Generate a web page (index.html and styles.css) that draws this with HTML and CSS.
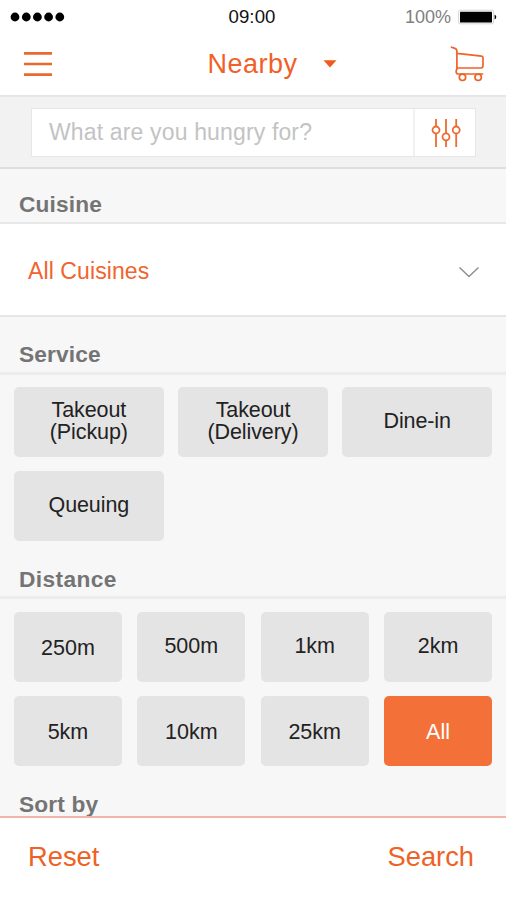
FILE: index.html
```html
<!DOCTYPE html>
<html lang="en">
<head>
<meta charset="utf-8">
<title>Nearby</title>
<link rel="stylesheet" href="styles.css">
</head>
<body>
<div class="app">
  <div class="status">
    <svg class="signal" width="56" height="10" viewBox="0 0 56 10"><circle cx="5" cy="5" r="4.4"/><circle cx="16.3" cy="5" r="4.4"/><circle cx="27.4" cy="5" r="4.4"/><circle cx="38.6" cy="5" r="4.4"/><circle cx="49.8" cy="5" r="4.4"/></svg>
    <span class="time">09:00</span>
    <div class="power">
      <span class="percent">100%</span>
      <svg width="40" height="16" viewBox="0 0 40 16"><rect x=".6" y="1.2" width="35" height="13.6" rx="1.5" fill="#fff" stroke="#ccc" stroke-width=".8"/><rect x="2" y="2.7" width="32" height="10.8" rx=".5"/><path d="M36.6 5.8a2.4 2.4 0 0 1 0 4.6z"/></svg>
    </div>
  </div>
  <header class="nav">
    <svg class="menu" width="28" height="26" viewBox="0 0 28 26" stroke="#ea6a2e" stroke-width="2.7"><path d="M0 2.4h28M0 13h28M0 23.7h28"/></svg>
    <div class="place"><span>Nearby</span><svg width="14" height="8" viewBox="0 0 14 8"><path d="M.5.3h13L7 7.5z" fill="#f05a1c"/></svg></div>
    <svg class="cart" width="36" height="38" viewBox="0 0 36 38" fill="none" stroke="#ee6428" stroke-width="1.7" stroke-linejoin="round" stroke-linecap="round"><path d="M1.500 2.200l3.500 1.200c1.400.5 1.900 1.200 1.900 2.600V24.300M7 8.300l24.500 2.900q1.500.2 1.500 1.600v8q0 2-2 2.200H7.200M7 24.300c-1.300.8-1.300 4.700 1 4.700h24.500"/><circle cx="12.500" cy="32.300" r="3.200"/><circle cx="28.200" cy="32.300" r="3.200"/></svg>
  </header>
  <div class="searchbar">
    <div class="field">
      <span class="placeholder">What are you hungry for?</span>
      <div class="filter"><svg width="30" height="30" viewBox="0 0 30 30" fill="none" stroke="#ec6c32" stroke-width="1.8"><path d="M5 1v7.500M5 15.500V29M15 1v14.300M15 22.300V29M25.200 1v7.500M25.200 15.500V29"/><circle cx="5" cy="12" r="3.500"/><circle cx="15" cy="18.800" r="3.500"/><circle cx="25.200" cy="12" r="3.500"/></svg></div>
    </div>
  </div>
  <main class="content">
    <h2 class="heading cuisine">Cuisine</h2>
    <div class="select"><span>All Cuisines</span><svg width="22" height="13" viewBox="0 0 22 13" fill="none" stroke="#909090" stroke-width="1.5"><path d="M1.500 1.500l9.500 9 9.500-9"/></svg></div>
    <h2 class="heading service">Service</h2>
    <div class="grid three">
      <div class="option">Takeout<br>(Pickup)</div><div class="option">Takeout<br>(Delivery)</div><div class="option">Dine-in</div><div class="option">Queuing</div>
    </div>
    <h2 class="heading distance">Distance</h2>
    <div class="grid four">
      <div class="option low">250m</div><div class="option">500m</div><div class="option">1km</div><div class="option">2km</div>
      <div class="option low">5km</div><div class="option low">10km</div><div class="option low">25km</div><div class="option low active">All</div>
    </div>
    <h2 class="heading sort">Sort by</h2>
  </main>
  <footer class="actions"><span>Reset</span><span>Search</span></footer>
</div>
</body>
</html>
```
FILE: styles.css
```css
* { box-sizing: border-box; }
body {
  margin: 0;
  font-family: "Liberation Sans", Arial, sans-serif;
  background: #fff;
}
svg { display: block; flex: none; }
.app {
  width: 506px;
  height: 900px;
  display: flex;
  flex-direction: column;
  overflow: hidden;
  background: #fff;
}
.status {
  height: 33px;
  padding: 0 8px 0 10px;
  display: grid;
  grid-template-columns: 1fr auto 1fr;
  align-items: center;
}
.time { font-size: 18.6px; letter-spacing: .1px; color: #111; margin-right: 4px; }
.power { display: flex; justify-content: flex-end; align-items: center; gap: 7px; }
.percent { font-size: 18px; color: #808080; padding-top: 1px; }
.nav {
  height: 64px;
  padding: 2px 20px 2px 24px;
  border-bottom: 2px solid #e6e6e6;
  display: flex;
  align-items: center;
  justify-content: space-between;
}
.place {
  display: flex;
  align-items: center;
  gap: 25px;
  padding-left: 42px;
  font-size: 27px;
  letter-spacing: .5px;
  color: #f06028;
}
.searchbar {
  height: 72px;
  padding: 11px 30px 0 31px;
  background: #f2f2f2;
  border-bottom: 2px solid #dedede;
}
.field {
  height: 49px;
  display: flex;
  align-items: stretch;
  background: #fff;
  border: 1px solid #e6e6e6;
}
.placeholder {
  flex: 1;
  padding-left: 17px;
  line-height: 47px;
  font-size: 23px;
  letter-spacing: .15px;
  color: #c3c3c3;
}
.filter {
  width: 62px;
  padding-left: 2px;
  border-left: 2px solid #f1f1f1;
  display: flex;
  align-items: center;
  justify-content: center;
}
.content {
  flex: 1;
  min-height: 0;
  overflow: hidden;
  background: #f7f7f7;
}
.heading {
  margin: 0;
  padding-left: 19px;
  font-size: 22.7px;
  line-height: 26px;
  font-weight: bold;
  letter-spacing: .15px;
  color: #747474;
}
.cuisine { height: 55px; padding-top: 22px; border-bottom: 2px solid #e8e8e8; }
.select {
  height: 93px;
  padding: 4px 26px 0 28px;
  display: flex;
  align-items: center;
  justify-content: space-between;
  background: #fff;
  border-bottom: 2px solid #e6e6e6;
  font-size: 23px;
  letter-spacing: .1px;
  color: #f0642e;
}
.select svg { margin-top: 2px; }
.service { height: 58px; padding-top: 24px; border-bottom: 3px solid #ececec; }
.grid { display: grid; padding: 12px 14px 0; grid-auto-rows: 70px; }
.three { grid-template-columns: repeat(3, 1fr); gap: 14px 14.500px; }
.four { grid-template-columns: repeat(4, 1fr); gap: 14px 15.500px; padding-top: 13px; }
.option {
  display: flex;
  align-items: center;
  justify-content: center;
  padding-bottom: 3px;
  border-radius: 5px;
  background: #e4e4e4;
  color: #222;
  font-size: 21.500px;
  line-height: 22px;
  text-align: center;
}
.three .option { letter-spacing: -.1px; }
.low { padding: 1px 0 0; }
.active { background: #f37138; color: #fff; }
.distance { height: 58px; padding-top: 25px; border-bottom: 3px solid #ececec; letter-spacing: .4px; }
.sort { padding-top: 25px; }
.actions {
  height: 84px;
  padding: 23px 32px 0 28px;
  border-top: 2px solid #f3b5a8;
  display: flex;
  justify-content: space-between;
  font-size: 27.300px;
  line-height: 31px;
  color: #ee6226;
}
```
